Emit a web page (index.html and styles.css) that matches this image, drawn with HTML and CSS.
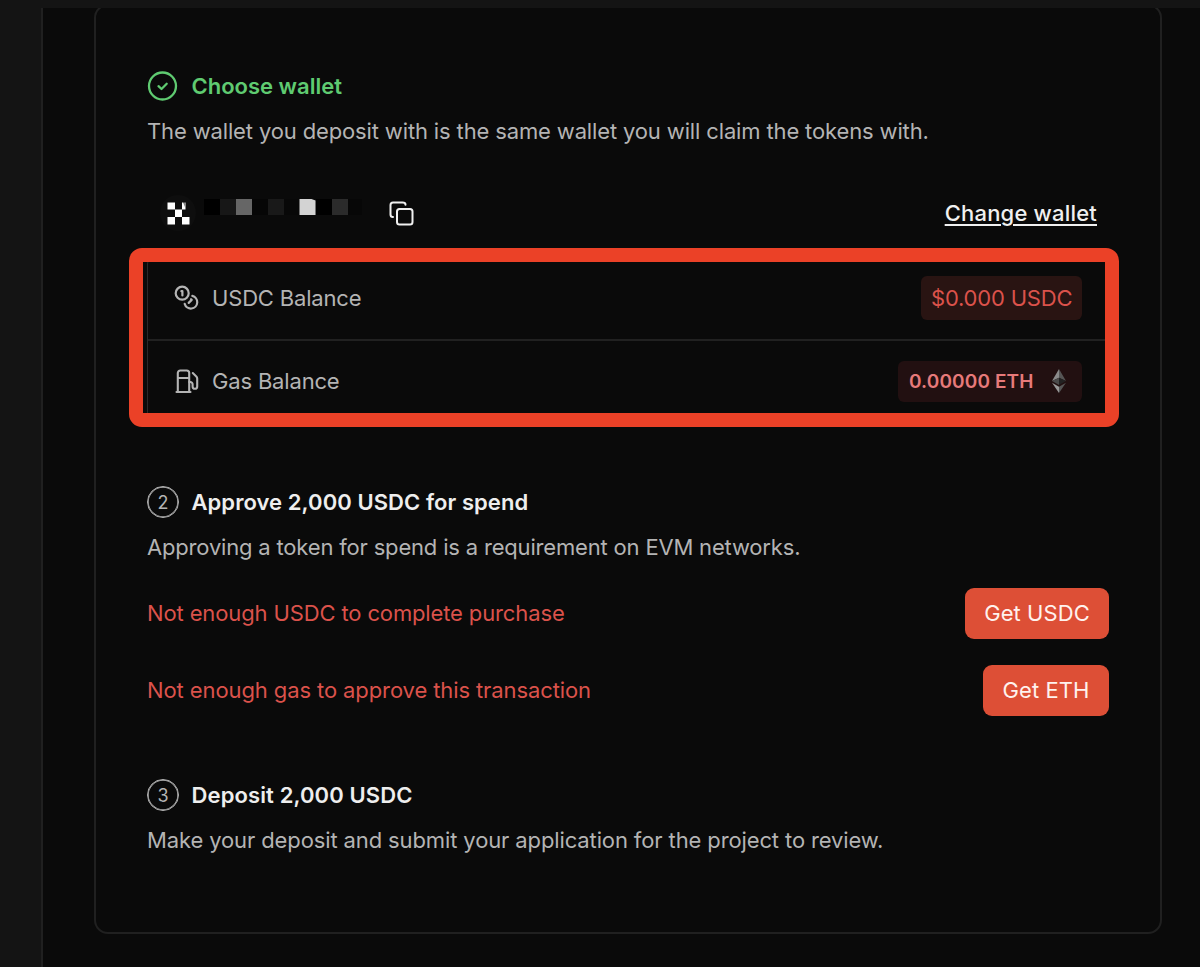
FILE: index.html
```html
<!DOCTYPE html>
<html lang="en">
  <head>
    <meta charset="UTF-8" />
    <meta name="viewport" content="width=device-width, initial-scale=1.0" />
    <title>Deposit</title>
    <link rel="stylesheet" href="styles.css">
  </head>
  <body>
    <main class="panel">
      <div class="card">
        <section class="step step-wallet">
          <div class="step-header done">
            <svg class="step-check" viewBox="0 0 32 32" fill="none" stroke="currentColor" stroke-width="2.3" stroke-linecap="round" stroke-linejoin="round">
              <circle cx="15.5" cy="16" r="13.5" />
              <path d="M11.5 16.2l3 2.8 5.2-5.2" />
            </svg>
            <h2 class="step-title title-wallet">Choose wallet</h2>
          </div>
          <p class="step-text text-wallet">The wallet you deposit with is the same wallet you will claim the tokens with.</p>

          <div class="wallet-row">
            <svg class="avatar" viewBox="0 0 36 36">
              <circle cx="18" cy="18" r="18" fill="#0e0e0e" />
              <path fill="#fff" d="M7.500 7.500h7.500v7H7.500zM22 7.500h1.500l1 4.500V7.500h1v7h-3.500zM15 14.500h7v7.500h-7zM7.500 22h7.500v7.500H7.500zM22 22h7.500v7.500h-7.500z" />
            </svg>
            <svg class="address" viewBox="0 0 164 18">
              <rect x="6" y="1" width="16" height="16" fill="#000" />
              <rect x="22" y="1" width="16" height="16" fill="#171717" />
              <rect x="38" y="1" width="16" height="16" fill="#666" />
              <rect x="54" y="1" width="16" height="16" fill="#060606" />
              <rect x="70" y="1" width="16" height="16" fill="#191919" />
              <rect x="86" y="1" width="15" height="16" fill="#080808" />
              <path d="M101.500 1h12l4 1.500V17h-16z" fill="#d3d3d3" />
              <rect x="118" y="1" width="16" height="16" fill="#000" />
              <rect x="134" y="1" width="16" height="16" fill="#2b2b2b" />
              <rect x="150" y="1" width="14" height="16" fill="#070707" />
            </svg>
            <svg class="copy-icon" viewBox="0 0 26 26" fill="none" stroke="#f0f0f0" stroke-width="2" stroke-linecap="round" stroke-linejoin="round">
              <rect x="8" y="9" width="15.500" height="15.500" rx="2.500" />
              <path d="M4 17C2.300 17 1.500 16.200 1.500 14.500V5C1.500 3.300 2.300 2.500 4 2.500H13.500C15.200 2.500 16.500 3.300 16.500 4.800" />
            </svg>
            <a class="change-link" href="#">Change wallet</a>
          </div>

          <div class="balances">
            <div class="balance-row">
              <svg class="balance-icon" viewBox="0 0 26 26" fill="none" stroke="currentColor" stroke-width="2.200" stroke-linecap="round" stroke-linejoin="round">
                <circle cx="8.200" cy="8.200" r="6.500" />
                <path d="M18.300 10.900A6.400 6.400 0 1 1 10.700 18.900" />
                <path d="M7.400 6.200h1v4.200" />
                <path d="M17 14.200l.7.700-3 3" />
              </svg>
              <span class="balance-label">USDC Balance</span>
              <span class="badge badge-usdc">$0.000 USDC</span>
            </div>
            <div class="balance-row">
              <svg class="balance-icon" viewBox="0 0 26 26" fill="none" stroke="currentColor" stroke-width="2.100" stroke-linecap="round" stroke-linejoin="round">
                <path d="M2.500 24h14M3.800 10h11.200M15.200 24V5a2.500 2.500 0 0 0-2.500-2.500H6.300A2.500 2.500 0 0 0 3.800 5v19" />
                <path d="M15.200 14h1.200a2.200 2.200 0 0 1 2.200 2.200v2.300a2.300 2.300 0 0 0 4.600 0V10.500c0-.8-.3-1.500-.9-2.100L18.800 5" />
              </svg>
              <span class="balance-label">Gas Balance</span>
              <span class="badge badge-eth">
                <span class="eth-amount">0.00000 ETH</span>
                <svg class="eth-icon" viewBox="0 0 14 24">
                  <path fill="#8a8a8a" d="M7 0L0 12l7-3.200z" />
                  <path fill="#555" d="M7 0l7 12-7-3.200z" />
                  <path fill="#4a4a4a" d="M7 8.800L0 12l7 4z" />
                  <path fill="#222" d="M7 8.800l7 3.200-7 4z" />
                  <path fill="#999" d="M0 13.800L7 24v-6.200z" />
                  <path fill="#555" d="M14 13.800L7 24v-6.200z" />
                </svg>
              </span>
            </div>
            <div class="highlight"></div>
          </div>
        </section>

        <section class="step step-approve">
          <div class="step-header">
            <span class="step-number">2</span>
            <h2 class="step-title title-approve">Approve 2,000 USDC for spend</h2>
          </div>
          <p class="step-text text-approve">Approving a token for spend is a requirement on EVM networks.</p>
          <div class="error-row">
            <span class="error-usdc">Not enough USDC to complete purchase</span>
            <button class="btn btn-usdc">Get USDC</button>
          </div>
          <div class="error-row">
            <span class="error-gas">Not enough gas to approve this transaction</span>
            <button class="btn btn-eth">Get ETH</button>
          </div>
        </section>

        <section class="step">
          <div class="step-header">
            <span class="step-number">3</span>
            <h2 class="step-title title-deposit">Deposit 2,000 USDC</h2>
          </div>
          <p class="step-text text-deposit">Make your deposit and submit your application for the project to review.</p>
        </section>
      </div>
    </main>
  </body>
</html>
```
FILE: styles.css
```css
* {
  box-sizing: border-box;
}

body {
  margin: 0;
  padding: 8px 0 0 41px;
  background: #141414;
  color: #b4b4b4;
  font-family: Inter, "Liberation Sans", sans-serif;
  font-size: 22px;
  line-height: 32px;
}

.panel {
  height: 959px;
  padding-left: 51px;
  border-left: 2px solid #202020;
  background: #0a0a0a;
  overflow: hidden;
}

.card {
  width: 1068px;
  height: 930px;
  margin-top: -4px;
  padding: 64px 51px 0;
  border: 2px solid #202020;
  border-radius: 14px;
}

.step-wallet {
  height: 416px;
}

.step-approve {
  height: 293px;
}

.step-header {
  display: flex;
  align-items: center;
  gap: 12.5px;
  height: 32px;
}

.step-title {
  margin: 0;
  color: #eee;
  font-size: 22px;
  font-weight: 600;
}

.title-approve {
  letter-spacing: 0.07px;
}

.title-deposit {
  letter-spacing: 0.12px;
}

.done,
.done .step-title {
  color: #5fcb71;
}

.step-check {
  width: 32px;
  height: 32px;
}

.step-number {
  display: flex;
  align-items: center;
  justify-content: center;
  width: 32px;
  height: 32px;
  padding-top: 1px;
  border: 1px solid #b4b4b4;
  border-radius: 50%;
  box-shadow: inset 0 0 0 0.7px #b4b4b4;
  font-size: 18px;
}

.step-text {
  margin: 13px 0 0;
  white-space: nowrap;
}

.text-wallet {
  letter-spacing: -0.14px;
}

.text-approve {
  letter-spacing: -0.18px;
}

.text-deposit {
  letter-spacing: -0.12px;
}

.wallet-row {
  display: flex;
  align-items: center;
  height: 36px;
  margin-top: 48px;
  padding: 0 12px 0 13px;
}

.avatar {
  width: 36px;
  height: 36px;
}

.address {
  width: 164px;
  height: 18px;
  margin: 0 27px 12px 2px;
}

.copy-icon {
  width: 26px;
  height: 26px;
}

.change-link {
  margin-left: auto;
  color: #f0f0f0;
  font-weight: 500;
  letter-spacing: 0.2px;
  text-decoration: underline;
  text-decoration-thickness: 2px;
  text-underline-offset: 3px;
}

.balances {
  position: relative;
  height: 167px;
  margin-top: 25px;
  border: 1px solid #292929;
  border-radius: 8px;
}

.balance-row {
  display: flex;
  align-items: center;
  height: 82px;
  padding: 0 26px;
}

.balance-row + .balance-row {
  border-top: 2px solid #212121;
}

.balance-icon {
  width: 26px;
  height: 26px;
  margin-right: 12px;
}

.balance-label {
  letter-spacing: -0.17px;
}

.badge {
  display: flex;
  align-items: center;
  justify-content: space-between;
  margin-left: auto;
  border-radius: 6px;
  white-space: nowrap;
}

.badge-usdc {
  width: 161px;
  height: 44px;
  padding: 0 10px;
  background: #291412;
  color: #db524b;
  letter-spacing: -0.2px;
}

.badge-eth {
  width: 184px;
  height: 41px;
  padding: 0 16px 0 11px;
  background: #221011;
  color: #e77a7a;
  font-size: 19px;
  font-weight: 600;
  letter-spacing: 0.12px;
}

.eth-amount {
  padding-top: 2px;
}

.eth-icon {
  width: 14px;
  height: 24px;
}

/* red frame drawn over the balance table */
.highlight {
  position: absolute;
  top: -9px;
  left: -19px;
  width: 990px;
  height: 179px;
  border: 14px solid #eb4127;
  border-radius: 13px;
}

.error-row {
  display: flex;
  align-items: center;
  justify-content: space-between;
  height: 51px;
  margin-top: 25.500px;
  color: #db524b;
}

.text-approve + .error-row {
  margin-top: 25px;
}

.error-usdc {
  padding-bottom: 1px;
  letter-spacing: -0.13px;
}

.error-gas {
  letter-spacing: -0.1px;
}

.btn {
  height: 51px;
  padding: 0 0 1px;
  border: none;
  border-radius: 9px;
  background: #dd4f36;
  color: #fff2ee;
  font: inherit;
  letter-spacing: 0.08px;
}

.btn-usdc {
  width: 144px;
}

.btn-eth {
  width: 126px;
}
```
